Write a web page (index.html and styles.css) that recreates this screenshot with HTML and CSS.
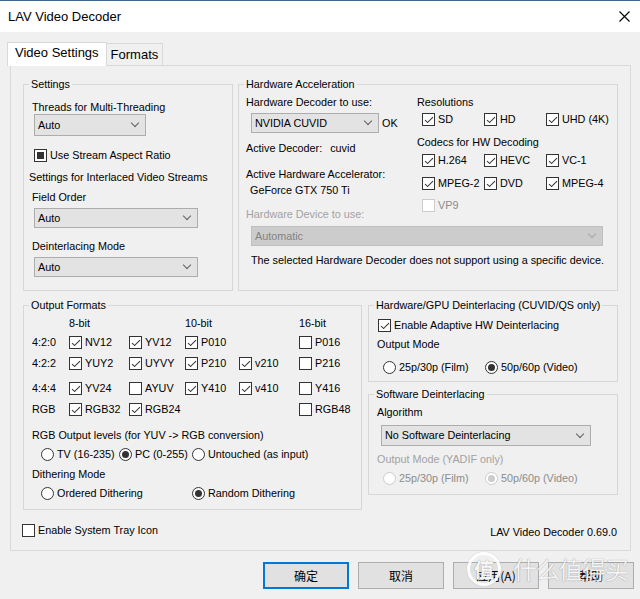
FILE: index.html
```html
<!DOCTYPE html>
<html>
<head>
<meta charset="utf-8">
<title>LAV Video Decoder</title>
<link rel="stylesheet" href="styles.css">
</head>
<body>
<div class="titlebar">
  <span class="title">LAV Video Decoder</span>
  <svg class="close" width="11" height="11" viewBox="0 0 11 11"><path d="M0.5 0.5L10.5 10.5M10.5 0.5L0.5 10.5" stroke="#000" stroke-width="1.1" fill="none"/></svg>
</div>

<div class="tabs">
  <div class="tab active">Video Settings</div>
  <div class="tab">Formats</div>
</div>

<div class="panel">
  <div class="row1">
    <fieldset class="grp">
      <legend>Settings</legend>
      <div class="gc pl8">
        <div class="t mt10">Threads for Multi-Threading</div>
        <div class="combo h22 w112 ml2"><span>Auto</span><i class="chev"></i></div>
        <label class="chk mt13 ml2"><span class="cb ind"></span>Use Stream Aspect Ratio</label>
        <div class="t mt9 mln3">Settings for Interlaced Video Streams</div>
        <div class="t mt7">Field Order</div>
        <div class="combo w164 mt4 ml2"><span>Auto</span><i class="chev"></i></div>
        <div class="t mt12">Deinterlacing Mode</div>
        <div class="combo w164 mt4 ml2"><span>Auto</span><i class="chev"></i></div>
      </div>
    </fieldset>

    <fieldset class="grp">
      <legend>Hardware Acceleration</legend>
      <div class="gc pl7 hw">
        <div class="hw-left">
          <div class="t mt5">Hardware Decoder to use:</div>
          <div class="combo-row mt4">
            <div class="combo w128 ml5"><span>NVIDIA CUVID</span><i class="chev"></i></div>
            <span class="ok">OK</span>
          </div>
          <div class="t mt9">Active Decoder:<span class="val">cuvid</span></div>
          <div class="t mt13">Active Hardware Accelerator:</div>
          <div class="t mt3 ml4">GeForce GTX 750 Ti</div>
          <div class="t mt11 dis">Hardware Device to use:</div>
        </div>
        <div class="hw-right">
          <div class="t mt5">Resolutions</div>
          <div class="cbgrid mt4 ml5">
            <label class="chk"><span class="cb on"></span>SD</label>
            <label class="chk"><span class="cb on"></span>HD</label>
            <label class="chk"><span class="cb on"></span>UHD (4K)</label>
          </div>
          <div class="t mt10">Codecs for HW Decoding</div>
          <div class="cbgrid mt5 ml5">
            <label class="chk"><span class="cb on"></span>H.264</label>
            <label class="chk"><span class="cb on"></span>HEVC</label>
            <label class="chk"><span class="cb on"></span>VC-1</label>
          </div>
          <div class="cbgrid mt10 ml5">
            <label class="chk"><span class="cb on"></span>MPEG-2</label>
            <label class="chk"><span class="cb on"></span>DVD</label>
            <label class="chk"><span class="cb on"></span>MPEG-4</label>
          </div>
          <div class="cbgrid mt9 ml5">
            <label class="chk dis"><span class="cb"></span>VP9</label>
          </div>
        </div>
        <div class="combo dis span2 w352 mt5 ml5"><span>Automatic</span><i class="chev"></i></div>
        <div class="t span2 mt8 ml5">The selected Hardware Decoder does not support using a specific device.</div>
      </div>
    </fieldset>
  </div>

  <div class="row2">
    <fieldset class="grp g-out">
      <legend>Output Formats</legend>
      <div class="gc pl8">
        <div class="frow mt5">
          <span></span><span>8-bit</span><span></span><span>10-bit</span><span></span><span>16-bit</span>
        </div>
        <div class="frow mt6">
          <span class="rl">4:2:0</span>
          <label class="chk"><span class="cb on"></span>NV12</label>
          <label class="chk"><span class="cb on"></span>YV12</label>
          <label class="chk"><span class="cb on"></span>P010</label>
          <span></span>
          <label class="chk"><span class="cb"></span>P016</label>
        </div>
        <div class="frow mt8">
          <span class="rl">4:2:2</span>
          <label class="chk"><span class="cb on"></span>YUY2</label>
          <label class="chk"><span class="cb on"></span>UYVY</label>
          <label class="chk"><span class="cb on"></span>P210</label>
          <label class="chk"><span class="cb on"></span>v210</label>
          <label class="chk"><span class="cb"></span>P216</label>
        </div>
        <div class="frow mt12">
          <span class="rl">4:4:4</span>
          <label class="chk"><span class="cb on"></span>YV24</label>
          <label class="chk"><span class="cb"></span>AYUV</label>
          <label class="chk"><span class="cb on"></span>Y410</label>
          <label class="chk"><span class="cb on"></span>v410</label>
          <label class="chk"><span class="cb"></span>Y416</label>
        </div>
        <div class="frow mt8">
          <span class="rl">RGB</span>
          <label class="chk"><span class="cb on"></span>RGB32</label>
          <label class="chk"><span class="cb on"></span>RGB24</label>
          <span></span>
          <span></span>
          <label class="chk"><span class="cb"></span>RGB48</label>
        </div>
        <div class="t mt13">RGB Output levels (for YUV -&gt; RGB conversion)</div>
        <div class="rrow levels mt6 ml9">
          <label class="chk"><span class="rb"></span>TV (16-235)</label>
          <label class="chk"><span class="rb on"></span>PC (0-255)</label>
          <label class="chk"><span class="rb"></span>Untouched (as input)</label>
        </div>
        <div class="t mt7">Dithering Mode</div>
        <div class="rrow dither mt6 ml9">
          <label class="chk"><span class="rb"></span>Ordered Dithering</label>
          <label class="chk"><span class="rb on"></span>Random Dithering</label>
        </div>
      </div>
    </fieldset>

    <div class="rcol">
      <fieldset class="grp g-hwd">
        <legend>Hardware/GPU Deinterlacing (CUVID/QS only)</legend>
        <div class="gc pl8">
          <label class="chk mt7 ml1"><span class="cb on"></span>Enable Adaptive HW Deinterlacing</label>
          <div class="t mt6">Output Mode</div>
          <div class="rrow modes mt10 ml6">
            <label class="chk"><span class="rb"></span>25p/30p (Film)</label>
            <label class="chk"><span class="rb on"></span>50p/60p (Video)</label>
          </div>
        </div>
      </fieldset>
      <fieldset class="grp g-sw">
        <legend>Software Deinterlacing</legend>
        <div class="gc pl8">
          <div class="t mt5">Algorithm</div>
          <div class="combo h21 w210 mt6 ml4"><span>No Software Deinterlacing</span><i class="chev"></i></div>
          <div class="t mt7 dis">Output Mode (YADIF only)</div>
          <div class="rrow modes mt6 ml6">
            <label class="chk dis"><span class="rb"></span>25p/30p (Film)</label>
            <label class="chk dis"><span class="rb on"></span>50p/60p (Video)</label>
          </div>
        </div>
      </fieldset>
    </div>
  </div>

  <div class="foot">
    <label class="chk tray"><span class="cb"></span>Enable System Tray Icon</label>
    <span class="ver">LAV Video Decoder 0.69.0</span>
  </div>
</div>

<div class="buttons">
  <button class="btn focus">确定</button>
  <button class="btn">取消</button>
  <button class="btn">应用(A)</button>
  <button class="btn">帮助</button>
</div>

<div class="watermark">
  <span class="wm-logo">值</span>
  <span class="wm-text">什么值得买</span>
</div>
</body>
</html>
```

FILE: styles.css
```css
* { box-sizing: border-box; }
html, body { margin: 0; padding: 0; }
body {
  width: 640px;
  height: 599px;
  overflow: hidden;
  position: relative;
  background: #f0f0f0;
  color: #000;
  font-family: "Liberation Sans", Arial, sans-serif;
  font-size: 10.8px;
  line-height: 13px;
}

/* title bar */
.titlebar {
  height: 32px;
  background: #fff;
  border-top: 1px solid #41678f;
  display: flex;
  align-items: center;
  justify-content: space-between;
  padding: 0 10px 0 8px;
}
.title { font-size: 13px; line-height: 16px; }
.close { display: block; }

/* tabs */
.tabs {
  display: flex;
  align-items: flex-end;
  margin: 10px 0 -1px 7px;
  position: relative;
  z-index: 1;
}
.tab {
  font-size: 13px;
  line-height: 15px;
  border: 1px solid #d9d9d9;
  border-bottom: none;
}
.tab.active {
  height: 24px;
  padding: 2px 7px 0 7px;
  background: #fff;
}
.tab:not(.active) {
  height: 22px;
  margin-bottom: 1px;
  padding: 3px 4px 0 4px;
  border-left: none;
  background: #f0f0f0;
}

/* panel */
.panel {
  margin-left: 10px;
  width: 621px;
  height: 486px;
  border: 1px solid #d9d9d9;
  background: #f0f0f0;
  padding: 12px 12px 0 12px;
}
.row1 {
  display: grid;
  grid-template-columns: 210px 380px;
  column-gap: 5px;
  height: 213px;
}
.row2 {
  display: grid;
  grid-template-columns: 339px 250px;
  column-gap: 6px;
  margin-top: 8px;
  height: 211px;
}
.rcol { display: flex; flex-direction: column; }

/* group boxes */
.grp {
  margin: 0;
  padding: 0;
  min-width: 0;
  border: 1px solid #d7d7d7;
}
.grp legend {
  margin-left: 5px;
  padding: 0 2px;
  line-height: 13px;
}
.g-hwd { height: 83px; }
.g-sw { height: 107px; margin-top: 6px; }

.pl7 { padding-left: 7px; }
.pl8 { padding-left: 8px; }

.t { line-height: 13px; white-space: nowrap; }
.dis { color: #a2a2a2; }
.val { margin-left: 8px; }

.mt3 { margin-top: 3px; }
.mt4 { margin-top: 4px; }
.mt5 { margin-top: 5px; }
.mt6 { margin-top: 6px; }
.mt7 { margin-top: 7px; }
.mt8 { margin-top: 8px; }
.mt9 { margin-top: 9px; }
.mt10 { margin-top: 10px; }
.mt11 { margin-top: 11px; }
.mt12 { margin-top: 12px; }
.mt13 { margin-top: 13px; }
.ml1 { margin-left: 1px; }
.ml2 { margin-left: 2px; }
.ml4 { margin-left: 4px; }
.ml5 { margin-left: 5px; }
.ml6 { margin-left: 6px; }
.ml9 { margin-left: 9px; }
.mln3 { margin-left: -3px; }

/* combo boxes */
.combo {
  height: 20px;
  display: flex;
  align-items: center;
  justify-content: space-between;
  padding: 0 7px 0 3px;
  background: #e3e3e3;
  border: 1px solid #adadad;
  white-space: nowrap;
}
.combo.h22 { height: 22px; }
.combo.h21 { height: 21px; }
.combo.dis {
  background: #cccccc;
  border-color: #bfbfbf;
  color: #838383;
}
.w112 { width: 112px; }
.w128 { width: 128px; }
.w164 { width: 164px; }
.w210 { width: 210px; }
.w352 { width: 352px; }
.chev {
  display: block;
  width: 6px;
  height: 6px;
  border: solid #606060;
  border-width: 0 1px 1px 0;
  transform: translateY(-2px) rotate(45deg);
}
.combo.dis .chev { border-color: #a8a8a8; }

.combo-row { display: flex; align-items: center; }
.ok { margin-left: 3px; }

/* hardware layout */
.hw {
  display: grid;
  grid-template-columns: 171px 1fr;
  align-items: start;
}
.span2 { grid-column: 1 / span 2; }
.cbgrid {
  display: grid;
  grid-template-columns: 62px 62px 62px;
  height: 13px;
  align-items: center;
}

/* checkboxes & radios */
.chk {
  display: flex;
  align-items: center;
  gap: 3px;
  height: 13px;
  white-space: nowrap;
}
.cb, .rb {
  flex: none;
  display: grid;
  place-items: center;
  width: 13px;
  height: 13px;
  background: #fff;
  border: 1px solid #333;
}
.cb.on::after {
  content: "";
  width: 3px;
  height: 7px;
  margin-top: -2px;
  border: solid #333;
  border-width: 0 1px 1px 0;
  transform: rotate(40deg) skewX(-5deg);
}
.cb.ind::after {
  content: "";
  width: 7px;
  height: 7px;
  background: #333;
}
.rb { border-radius: 50%; }
.rb.on::after {
  content: "";
  width: 7px;
  height: 7px;
  border-radius: 50%;
  background: #333;
}
.chk.dis { color: #8c8c8c; }
.chk.dis .cb, .chk.dis .rb { border-color: #cccccc; background: #fff; }
.chk.dis .rb.on::after { background: #cccccc; }

/* output formats */
.frow {
  display: grid;
  grid-template-columns: 37px 60px 56px 54px 60px 1fr;
  height: 13px;
  align-items: center;
}
.rl { margin-top: -1px; }
.rrow { display: grid; height: 13px; align-items: center; }
.levels { grid-template-columns: 78px 73px auto; }
.dither { grid-template-columns: 151px auto; }
.modes { grid-template-columns: 102px auto; }

/* footer row */
.foot {
  display: flex;
  justify-content: space-between;
  align-items: center;
  margin-top: 14px;
  height: 13px;
}
.tray { margin-left: -1px; }
.ver { margin-top: 3px; margin-right: 1px; }

/* buttons */
.buttons {
  display: flex;
  justify-content: flex-end;
  gap: 9px;
  margin-top: 11px;
  padding-right: 6px;
}
.btn {
  width: 86px;
  height: 27px;
  margin: 0;
  padding: 0;
  background: #e1e1e1;
  border: 1px solid #adadad;
  font-family: "Noto Sans CJK SC", "Liberation Sans", sans-serif;
  font-size: 12px;
  color: #000;
}
.btn.focus { border: 2px solid #0078d7; }

/* watermark overlay */
.watermark {
  position: absolute;
  left: 467px;
  top: 552px;
  display: flex;
  align-items: center;
  gap: 12px;
  pointer-events: none;
}
.wm-logo {
  width: 34px;
  height: 34px;
  border-radius: 50%;
  border: 3px solid rgba(255,255,255,0.9);
  display: grid;
  place-items: center;
  font-family: "Noto Sans CJK SC", sans-serif;
  font-size: 20px;
  font-weight: bold;
  color: rgba(255,255,255,0.95);
  text-shadow: 0 0 1px rgba(0,0,0,0.45);
  box-shadow: 0 0 1px rgba(0,0,0,0.3);
}
.wm-text {
  font-family: "Noto Sans CJK SC", sans-serif;
  font-size: 24px;
  line-height: 34px;
  letter-spacing: -1px;
  color: rgba(255,255,255,0.92);
  text-shadow: 0 0 1px rgba(0,0,0,0.45);
}
```
